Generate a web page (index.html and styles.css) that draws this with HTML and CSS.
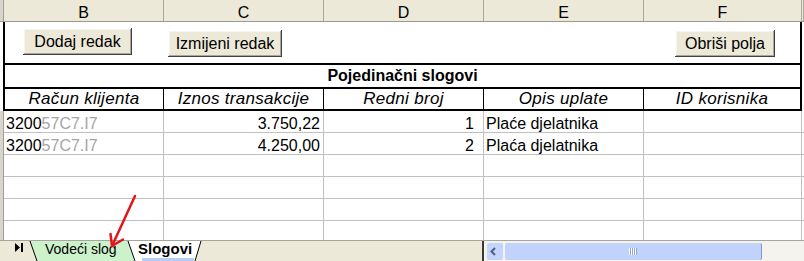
FILE: index.html
```html
<!DOCTYPE html>
<html lang="hr">
<head>
  <meta charset="UTF-8" />
  <title>Slogovi</title>
  <link rel="stylesheet" href="styles.css">
</head>
<body>

  <div class="window">
    <div class="sheet">
      <div class="colhead">
        <div class="stub"></div>
        <div class="col">B</div>
        <div class="col">C</div>
        <div class="col">D</div>
        <div class="col">E</div>
        <div class="col">F</div>
        <div class="col"></div>
      </div>

      <div class="form">
        <div class="buttons">
          <button class="btn btn-add">Dodaj redak</button>
          <button class="btn btn-edit">Izmijeni redak</button>
          <button class="btn btn-clear">Obriši polja</button>
        </div>
        <div class="title">Pojedinačni slogovi</div>
        <div class="labels">
          <div>Račun klijenta</div>
          <div>Iznos transakcije</div>
          <div>Redni broj</div>
          <div>Opis uplate</div>
          <div>ID korisnika</div>
        </div>
      </div>

      <div class="row">
        <div class="stub"></div>
        <div class="cell">3200<span class="masked">57C7.I7</span></div>
        <div class="cell num">3.750,22</div>
        <div class="cell num seq">1</div>
        <div class="cell">Plaće djelatnika</div>
        <div class="cell"></div>
        <div class="cell"></div>
      </div>
      <div class="row">
        <div class="stub"></div>
        <div class="cell">3200<span class="masked">57C7.I7</span></div>
        <div class="cell num">4.250,00</div>
        <div class="cell num seq">2</div>
        <div class="cell">Plaća djelatnika</div>
        <div class="cell"></div>
        <div class="cell"></div>
      </div>
      <div class="row">
        <div class="stub"></div>
        <div class="cell"></div><div class="cell"></div><div class="cell"></div>
        <div class="cell"></div><div class="cell"></div><div class="cell"></div>
      </div>
      <div class="row">
        <div class="stub"></div>
        <div class="cell"></div><div class="cell"></div><div class="cell"></div>
        <div class="cell"></div><div class="cell"></div><div class="cell"></div>
      </div>
      <div class="row">
        <div class="stub"></div>
        <div class="cell"></div><div class="cell"></div><div class="cell"></div>
        <div class="cell"></div><div class="cell"></div><div class="cell"></div>
      </div>
      <div class="row">
        <div class="stub"></div>
        <div class="cell"></div><div class="cell"></div><div class="cell"></div>
        <div class="cell"></div><div class="cell"></div><div class="cell"></div>
      </div>
    </div>

    <div class="tabbar">
      <div class="nav">
        <svg width="8" height="9" viewBox="0 0 8 9">
          <polygon points="0,0 5,4.5 0,9" fill="#000"/>
          <rect x="6" y="0" width="2" height="9" fill="#000"/>
        </svg>
      </div>
      <div class="tabs">
        <svg class="tab-shapes" width="180" height="20" viewBox="0 0 180 20">
          <polygon points="3,0 10,20 108,20 101,0" fill="#ccf2cc"/>
          <line x1="3" y1="0" x2="10" y2="20" stroke="#000" stroke-width="1"/>
          <polygon points="101,0 108,20 168,20 174,0" fill="#fff"/>
          <rect x="115" y="17" width="52" height="3" fill="#b4cdf5"/>
          <line x1="101" y1="0" x2="108" y2="20" stroke="#000" stroke-width="1"/>
          <line x1="174" y1="0" x2="168" y2="20" stroke="#000" stroke-width="1"/>
        </svg>
        <span class="tab-label tab-green">Vodeći slog</span>
        <span class="tab-label tab-active">Slogovi</span>
      </div>
      <div class="filler"></div>
      <div class="split"></div>
      <div class="hscroll">
        <div class="arrow-btn">
          <svg width="16" height="17" viewBox="0 0 16 17">
            <polyline points="8,5 4.5,8.5 8,12" fill="none" stroke="#4d6185" stroke-width="2"/>
          </svg>
        </div>
        <div class="thumb">
          <svg width="8" height="7" viewBox="0 0 8 7">
            <rect x="0" y="0" width="1" height="7" fill="#fff"/>
            <rect x="1" y="0" width="1" height="7" fill="#8ca5dc"/>
            <rect x="2" y="0" width="1" height="7" fill="#fff"/>
            <rect x="3" y="0" width="1" height="7" fill="#8ca5dc"/>
            <rect x="4" y="0" width="1" height="7" fill="#fff"/>
            <rect x="5" y="0" width="1" height="7" fill="#8ca5dc"/>
            <rect x="6" y="0" width="1" height="7" fill="#fff"/>
            <rect x="7" y="0" width="1" height="7" fill="#8ca5dc"/>
          </svg>
        </div>
      </div>
    </div>

    <!-- red annotation arrow drawn over the screenshot -->
    <svg class="pointer" width="804" height="261" viewBox="0 0 804 261">
      <g stroke="#e3151c" stroke-width="2.5" stroke-linecap="round" fill="none">
        <line x1="135" y1="196" x2="112" y2="246"/>
        <polyline points="110.5,234 112,246 123,239.5"/>
      </g>
    </svg>
  </div>

</body>
</html>
```

FILE: styles.css
```css
* {
  box-sizing: border-box;
}

body {
  margin: 0;
  font-family: "Liberation Sans", Arial, sans-serif;
  font-size: 16px;
  color: #000;
  background: #fff;
}

.window {
  position: relative;
  width: 804px;
  height: 261px;
  overflow: hidden;
}

.sheet {
  height: 240px;
  overflow: hidden;
}

/* column letters */
.colhead,
.row {
  display: grid;
  grid-template-columns: 4px 160px 160px 160px 160px 158px 2px;
}

.colhead {
  height: 22px;
  background: #ece9d8;
  border-bottom: 1px solid #9d9a8d;
}

.colhead .col {
  border-right: 1px solid #aca899;
  text-align: center;
  line-height: 17px;
  padding-top: 4px;
}

.stub {
  background: #d8d5cc;
  border-right: 1px solid #a09d92;
}

/* framed input block */
.form {
  margin-left: 3px;
  width: 799px;
  border-left: 2px solid #000;
  border-right: 2px solid #000;
}

.buttons {
  height: 41px;
  display: flex;
  align-items: flex-start;
}

.btn {
  height: 27px;
  padding: 0;
  border: none;
  background: #ece9d8;
  font-family: "Liberation Sans", Arial, sans-serif;
  font-size: 16px;
  color: #000;
  box-shadow: inset -1px -1px #404040, inset 1px 1px #fff, inset -2px -2px #aca899, inset 2px 2px #f5f4ee;
}

.btn-add {
  width: 109px;
  margin: 6px 0 0 18px;
}

.btn-edit {
  width: 114px;
  margin: 8px 0 0 36px;
}

.btn-clear {
  width: 100px;
  margin: 8px 25px 0 auto;
}

.title {
  height: 26px;
  border-top: 2px solid #000;
  border-bottom: 2px solid #000;
  text-align: center;
  font-weight: bold;
  line-height: 17px;
  padding-top: 2px;
}

.labels {
  height: 22px;
  display: grid;
  grid-template-columns: 159px 160px 160px 160px 1fr;
  border-bottom: 2px solid #000;
  font-style: italic;
  font-size: 17px;
  letter-spacing: 0.3px;
}

.labels div {
  text-align: center;
  line-height: 17px;
  padding-top: 1px;
  border-right: 1px solid #000;
}

.labels div:last-child {
  border-right: none;
}

/* data rows */
.row {
  height: 22px;
}

.cell {
  border-right: 1px solid #c0c0c0;
  border-bottom: 1px solid #c0c0c0;
  padding: 4px 2px 0 2px;
  line-height: 17px;
  white-space: nowrap;
  overflow: hidden;
}

.cell.num {
  text-align: right;
  padding-right: 3px;
}

.cell.seq {
  padding-right: 9px;
}

.masked {
  color: #a5a5a5;
}

/* sheet tabs + scrollbar */
.tabbar {
  height: 21px;
  display: flex;
  background: #ece9d8;
  border-top: 1px solid #a7a69d;
}

.nav {
  width: 27px;
  padding: 2px 0 0 15px;
}

.nav svg {
  display: block;
}

.tabs {
  position: relative;
  width: 180px;
  display: flex;
  font-size: 14px;
  line-height: 16px;
}

.tab-shapes {
  position: absolute;
  left: 0;
  top: 0;
}

.tab-label {
  position: relative;
}

.tab-green {
  margin-left: 18px;
  width: 93px;
}

.tab-active {
  font-weight: bold;
  font-size: 15px;
}

.filler {
  flex: 1;
}

.split {
  width: 2px;
  background: #3a3a3a;
}

.hscroll {
  flex: 0 0 320px;
  display: flex;
  align-items: flex-start;
  padding-top: 2px;
  background: #f4f3ee;
}

.arrow-btn {
  width: 16px;
  height: 17px;
  margin-left: 3px;
  background: #c4d5fb;
  border-radius: 2px;
}

.arrow-btn svg {
  display: block;
}

.thumb {
  width: 257px;
  height: 17px;
  margin-left: 2px;
  background: #c1d3fb;
  border-right: 1px solid #7f97cf;
  border-radius: 2px;
  display: flex;
  align-items: center;
  justify-content: center;
}

.pointer {
  position: absolute;
  left: 0;
  top: 0;
  pointer-events: none;
}
```
